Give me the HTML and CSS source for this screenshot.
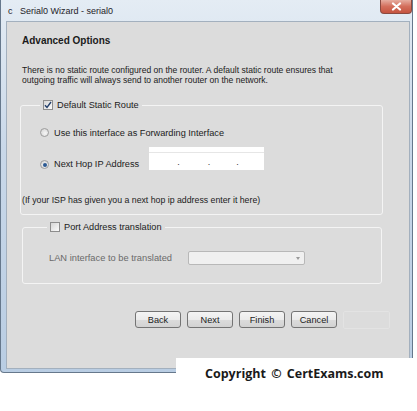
FILE: index.html
```html
<!DOCTYPE html>
<html>
<head>
    <meta name="viewport" content="width=device-width, initial-scale=1.0">
    <title>Serial0 Wizard - serial0</title>
    <link rel="stylesheet" href="styles.css">
</head>
<body>
    <div class="window">
        <div class="titlebar">
            <span class="app-icon">c</span>
            <span class="title">Serial0 Wizard - serial0</span>
            <span class="close">
                <svg width="11" height="9" viewBox="0 0 11 9"><path d="M2 1.5 L9 7.5 M9 1.5 L2 7.5" stroke="#fff" stroke-width="2.2" stroke-linecap="round"/></svg>
            </span>
        </div>
        <div class="client">
            <h1>Advanced Options</h1>
            <p class="intro">There is no static route configured on the router. A default static route ensures that<br>outgoing traffic will always send to another router on the network.</p>

            <fieldset class="group route">
                <legend><span class="check on"><svg width="8" height="8" viewBox="0 0 8 8"><path d="M1 4.2 L3 6.5 L7 1" fill="none" stroke="#233f6b" stroke-width="1.4"/></svg></span>Default Static Route</legend>
                <div class="opt first"><span class="radio"></span>Use this interface as Forwarding Interface</div>
                <div class="opt hop">
                    <span class="radio on"></span><span class="opt-label">Next Hop IP Address</span>
                    <div class="ip">
                        <div class="ip-field"><span>.</span><span>.</span><span>.</span></div>
                    </div>
                </div>
                <p class="note">(If your ISP has given you a next hop ip address enter it here)</p>
            </fieldset>

            <fieldset class="group pat">
                <legend><span class="check"></span>Port Address translation</legend>
                <div class="lan">
                    <span class="lan-label">LAN interface to be translated</span>
                    <div class="select"><span class="arrow"></span></div>
                </div>
            </fieldset>

            <div class="buttons">
                <button>Back</button>
                <button>Next</button>
                <button>Finish</button>
                <button>Cancel</button>
                <span class="ghost"></span>
            </div>
        </div>
    </div>
    <div class="copyright">Copyright &copy; CertExams.com</div>
</body>
</html>
```

FILE: styles.css
```css
body { margin: 0; width: 417px; height: 411px; overflow: hidden; background: #fff; font-family: "Liberation Sans", Arial, sans-serif; color: #1b1b1b; position: relative; }
.window { width: 413px; height: 373px; box-sizing: border-box; border: 1px solid #66788c; border-top: none; border-radius: 0 0 4px 4px; background: linear-gradient(#e4ecf4, #c9d8e9 40%, #b9cde3); padding: 0 2px 3px 5px; display: flex; flex-direction: column; }
.titlebar { height: 21px; display: flex; align-items: center; font-size: 9px; color: #1e2228; position: relative; }
.app-icon { margin-left: 2px; width: 12px; }
.close { position: absolute; right: -2px; top: 0; width: 32px; height: 14px; border: 1px solid #8a4a40; border-top: none; border-radius: 0 0 4px 4px; box-sizing: border-box; background: linear-gradient(#e6ada0, #d36e5b 50%, #c55440); display: flex; align-items: center; justify-content: center; }
.client { flex: 1; background: #dcdcdc; border: 1px solid #a3b0be; display: flex; flex-direction: column; }
h1 { font-size: 10px; line-height: 12px; font-weight: bold; margin: 13px 0 0 15px; }
.intro { font-size: 8.55px; line-height: 10px; margin: 18px 0 0 15px; }
.group { border: 1px solid #f4f4f4; border-radius: 3px; margin: 0; min-width: 0; }
.group legend { display: flex; align-items: center; padding: 0 3px; font-size: 9.2px; line-height: 12px; }
.check { width: 10px; height: 10px; box-sizing: border-box; border: 1px solid #8d8d8d; background: linear-gradient(135deg, #d6d6d6, #fbfbfb); margin-right: 4px; display: flex; align-items: center; justify-content: center; }
.route { margin: 14px 26px 0 13px; padding: 0 0 8px 19px; }
.opt { display: flex; align-items: center; font-size: 9.2px; line-height: 12px; }
.opt.first { margin-top: 16px; }
.opt.hop { margin-top: 8px; align-items: flex-end; }
.radio { width: 9px; height: 9px; box-sizing: border-box; border-radius: 50%; border: 1px solid #9c9c9c; background: radial-gradient(circle at 60% 60%, #f6f6f6, #d0d0d0); margin: 0 5px 1px 0; position: relative; }
.radio.on::after { content: ""; position: absolute; left: 1.5px; top: 1.5px; width: 4px; height: 4px; border-radius: 50%; background: #2c5a93; }
.opt-label { margin-right: 10px; }
.ip { width: 115px; height: 23px; box-sizing: border-box; background: #fff; padding-top: 5px; }
.ip-field { height: 17px; border-top: 1px solid #e6e6e6; display: flex; align-items: center; font-size: 9px; color: #333; padding-left: 28px; }
.ip-field span:nth-child(2) { margin-left: 28px; }
.ip-field span:nth-child(3) { margin-left: 26px; }
.note { font-size: 8.75px; line-height: 11px; margin: 25px 0 0 -18px; }
.pat { margin: 6px 27px 0 15px; padding: 0 0 18px 24px; }
.lan { display: flex; align-items: center; margin: 18px 0 0 2px; font-size: 9.3px; }
.lan-label { width: 139px; color: #6a6a6a; }
.select { width: 117px; height: 14px; box-sizing: border-box; border: 1px solid #b8b8b8; border-radius: 2px; background: #f0f0f0; position: relative; }
.arrow { position: absolute; right: 4px; top: 5px; border-left: 2.5px solid transparent; border-right: 2.5px solid transparent; border-top: 3px solid #9a9a9a; }
.buttons { display: flex; justify-content: flex-end; gap: 6px; margin-top: 27px; padding-right: 19px; }
.buttons button { width: 46px; height: 17px; padding: 0; font-family: "Liberation Sans", Arial, sans-serif; font-size: 9.2px; color: #1b1b1b; border: 1px solid #747474; border-radius: 3px; background: linear-gradient(#f4f4f4, #ebebeb 50%, #dcdcdc 51%, #d2d2d2); }
.ghost { width: 47px; height: 18px; box-sizing: border-box; border: 1px solid #e3e3e3; border-radius: 2px; }
.copyright { position: absolute; left: 176px; top: 358px; width: 241px; height: 53px; box-sizing: border-box; background: #fff; padding: 8px 0 0 29px; font-family: "Open Sans", sans-serif; font-weight: 700; font-size: 12.5px; line-height: 16px; word-spacing: 2px; color: #1a1a1a; }
```
